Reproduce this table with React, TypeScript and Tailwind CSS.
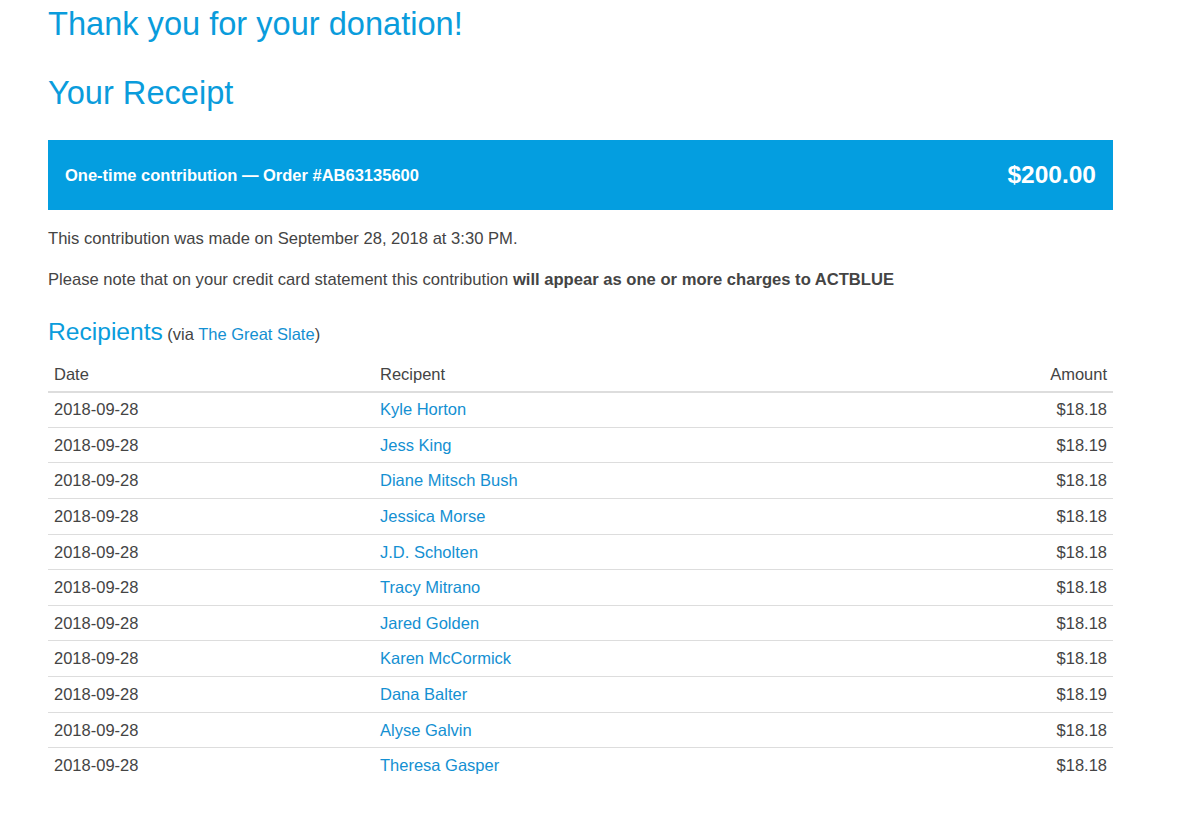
const rows = [
  { name: "Kyle Horton", amount: "$18.18" },
  { name: "Jess King", amount: "$18.19" },
  { name: "Diane Mitsch Bush", amount: "$18.18" },
  { name: "Jessica Morse", amount: "$18.18" },
  { name: "J.D. Scholten", amount: "$18.18" },
  { name: "Tracy Mitrano", amount: "$18.18" },
  { name: "Jared Golden", amount: "$18.18" },
  { name: "Karen McCormick", amount: "$18.18" },
  { name: "Dana Balter", amount: "$18.19" },
  { name: "Alyse Galvin", amount: "$18.18" },
  { name: "Theresa Gasper", amount: "$18.18" },
];

export default function App() {
  return (
    <div
      className="min-h-[820px] w-[1200px] bg-white text-[#444]"
      style={{ fontFamily: '"Liberation Sans", Arial, sans-serif' }}
    >
      <div className="ml-[48px] w-[1065px] pt-[6px]">
        <h1 className="text-[32.6px] leading-[36px] text-[#0a9cdc]">Thank you for your donation!</h1>
        <h2 className="mt-[32.6px] text-[32.6px] leading-[36px] text-[#0a9cdc]">Your Receipt</h2>

        <div className="mt-[29.4px] flex h-[70px] items-center justify-between bg-[#049ee0] pl-[17px] pr-[17px] text-white">
          <span className="text-[16.5px] font-bold">One-time contribution — Order #AB63135600</span>
          <span className="text-[24.5px] font-bold">$200.00</span>
        </div>

        <p className="mt-[19.5px] text-[16.6px] leading-[20px]">
          This contribution was made on September 28, 2018 at 3:30 PM.
        </p>
        <p className="mt-[21px] text-[16.6px] leading-[20px]">
          Please note that on your credit card statement this contribution{" "}
          <b>will appear as one or more charges to ACTBLUE</b>
        </p>

        <div className="mt-[28px] leading-[28px]">
          <span className="text-[24.6px] text-[#0a9cdc]">Recipients</span>{" "}
          <span className="text-[16.5px]">
            (via <a className="text-[#1490d2]">The Great Slate</a>)
          </span>
        </div>

        <table className="mt-[8.3px] w-full border-collapse text-[16.5px]">
          <thead>
            <tr className="h-[34px] border-b-2 border-[#dddddd]">
              <th className="w-[326px] pl-[6px] text-left font-normal">Date</th>
              <th className="pl-[6px] text-left font-normal">Recipent</th>
              <th className="pr-[6px] text-right font-normal">Amount</th>
            </tr>
          </thead>
          <tbody>
            {rows.map((r, i) => (
              <tr key={r.name} className={`h-[35.6px] ${i > 0 ? "border-t border-[#dddddd]" : ""}`}>
                <td className="pl-[6px]">2018-09-28</td>
                <td className="pl-[6px] text-[#1490d2]">{r.name}</td>
                <td className="pr-[6px] text-right">{r.amount}</td>
              </tr>
            ))}
          </tbody>
        </table>
      </div>
    </div>
  );
}
